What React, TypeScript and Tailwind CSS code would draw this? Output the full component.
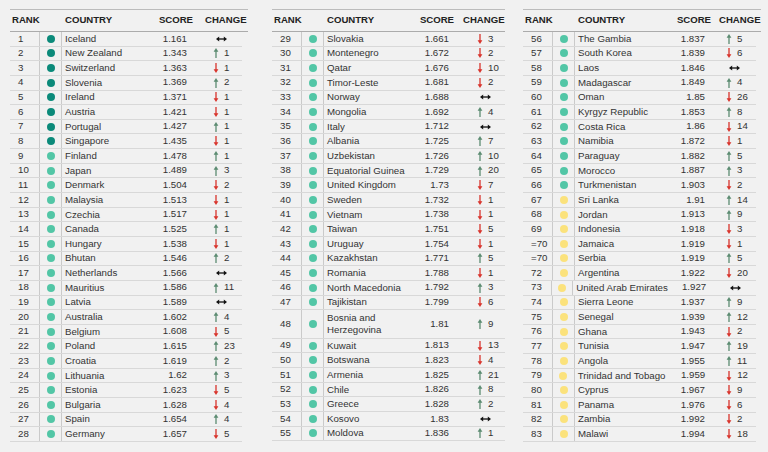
import React from 'react';

type Row = [string, string, string, 'up' | 'down' | 'same', string?, number?];

const col1: Row[] = [
  ['1', 'Iceland', '1.161', 'same', '', 0],
  ['2', 'New Zealand', '1.343', 'up', '1', 0],
  ['3', 'Switzerland', '1.363', 'down', '1', 0],
  ['4', 'Slovenia', '1.369', 'up', '2', 0],
  ['5', 'Ireland', '1.371', 'down', '1', 0],
  ['6', 'Austria', '1.421', 'down', '1', 0],
  ['7', 'Portugal', '1.427', 'up', '1', 0],
  ['8', 'Singapore', '1.435', 'down', '1', 0],
  ['9', 'Finland', '1.478', 'up', '1'],
  ['10', 'Japan', '1.489', 'up', '3'],
  ['11', 'Denmark', '1.504', 'down', '2'],
  ['12', 'Malaysia', '1.513', 'down', '1'],
  ['13', 'Czechia', '1.517', 'down', '1'],
  ['14', 'Canada', '1.525', 'up', '1'],
  ['15', 'Hungary', '1.538', 'down', '1'],
  ['16', 'Bhutan', '1.546', 'up', '2'],
  ['17', 'Netherlands', '1.566', 'same'],
  ['18', 'Mauritius', '1.586', 'up', '11'],
  ['19', 'Latvia', '1.589', 'same'],
  ['20', 'Australia', '1.602', 'up', '4'],
  ['21', 'Belgium', '1.608', 'down', '5'],
  ['22', 'Poland', '1.615', 'up', '23'],
  ['23', 'Croatia', '1.619', 'up', '2'],
  ['24', 'Lithuania', '1.62', 'up', '3'],
  ['25', 'Estonia', '1.623', 'down', '5'],
  ['26', 'Bulgaria', '1.628', 'down', '4'],
  ['27', 'Spain', '1.654', 'up', '4'],
  ['28', 'Germany', '1.657', 'down', '5'],
];

const col2: Row[] = [
  ['29', 'Slovakia', '1.661', 'down', '3'],
  ['30', 'Montenegro', '1.672', 'down', '2'],
  ['31', 'Qatar', '1.676', 'down', '10'],
  ['32', 'Timor-Leste', '1.681', 'down', '2'],
  ['33', 'Norway', '1.688', 'same'],
  ['34', 'Mongolia', '1.692', 'up', '4'],
  ['35', 'Italy', '1.712', 'same'],
  ['36', 'Albania', '1.725', 'up', '7'],
  ['37', 'Uzbekistan', '1.726', 'up', '10'],
  ['38', 'Equatorial Guinea', '1.729', 'up', '20'],
  ['39', 'United Kingdom', '1.73', 'down', '7'],
  ['40', 'Sweden', '1.732', 'down', '1'],
  ['41', 'Vietnam', '1.738', 'down', '1'],
  ['42', 'Taiwan', '1.751', 'down', '5'],
  ['43', 'Uruguay', '1.754', 'down', '1'],
  ['44', 'Kazakhstan', '1.771', 'up', '5'],
  ['45', 'Romania', '1.788', 'down', '1'],
  ['46', 'North Macedonia', '1.792', 'up', '3'],
  ['47', 'Tajikistan', '1.799', 'down', '6'],
  ['48', 'Bosnia and|Herzegovina', '1.81', 'up', '9'],
  ['49', 'Kuwait', '1.813', 'down', '13'],
  ['50', 'Botswana', '1.823', 'down', '4'],
  ['51', 'Armenia', '1.825', 'up', '21'],
  ['52', 'Chile', '1.826', 'up', '8'],
  ['53', 'Greece', '1.828', 'up', '2'],
  ['54', 'Kosovo', '1.83', 'same'],
  ['55', 'Moldova', '1.836', 'up', '1'],
];

const col3: Row[] = [
  ['56', 'The Gambia', '1.837', 'up', '5'],
  ['57', 'South Korea', '1.839', 'down', '6'],
  ['58', 'Laos', '1.846', 'same'],
  ['59', 'Madagascar', '1.849', 'up', '4'],
  ['60', 'Oman', '1.85', 'down', '26'],
  ['61', 'Kyrgyz Republic', '1.853', 'up', '8'],
  ['62', 'Costa Rica', '1.86', 'down', '14'],
  ['63', 'Namibia', '1.872', 'down', '1'],
  ['64', 'Paraguay', '1.882', 'up', '5'],
  ['65', 'Morocco', '1.887', 'up', '3'],
  ['66', 'Turkmenistan', '1.903', 'down', '2'],
  ['67', 'Sri Lanka', '1.91', 'up', '14', 2],
  ['68', 'Jordan', '1.913', 'up', '9', 2],
  ['69', 'Indonesia', '1.918', 'down', '3', 2],
  ['=70', 'Jamaica', '1.919', 'down', '1', 2],
  ['=70', 'Serbia', '1.919', 'up', '5', 2],
  ['72', 'Argentina', '1.922', 'down', '20', 2],
  ['73', 'United Arab Emirates', '1.927', 'same', '', 2],
  ['74', 'Sierra Leone', '1.937', 'up', '9', 2],
  ['75', 'Senegal', '1.939', 'up', '12', 2],
  ['76', 'Ghana', '1.943', 'down', '2', 2],
  ['77', 'Tunisia', '1.947', 'up', '19', 2],
  ['78', 'Angola', '1.955', 'up', '11', 2],
  ['79', 'Trinidad and Tobago', '1.959', 'down', '12', 2],
  ['80', 'Cyprus', '1.967', 'down', '9', 2],
  ['81', 'Panama', '1.976', 'down', '6', 2],
  ['82', 'Zambia', '1.992', 'down', '2', 2],
  ['83', 'Malawi', '1.994', 'down', '18', 2],
];

const dotColors = ['bg-[#0b8a7a]', 'bg-[#52c6a6]', 'bg-[#fbe27c]'];

function Arrow({ dir }: { dir: 'up' | 'down' | 'same' }) {
  if (dir === 'same') {
    return (
      <svg width="11" height="6" viewBox="0 0 11 6" className="ml-[3px]">
        <path d="M2 3H9" stroke="#111" strokeWidth="1.3" />
        <path d="M0 3L3.2 0.4V5.6Z" fill="#111" />
        <path d="M11 3L7.8 0.4V5.6Z" fill="#111" />
      </svg>
    );
  }
  const color = dir === 'up' ? '#5b8b71' : '#d8342c';
  return (
    <svg width="6" height="10" viewBox="0 0 6 10">
      {dir === 'up' ? (
        <>
          <path d="M3 10V3" stroke={color} strokeWidth="1.3" />
          <path d="M0.6 3.8L3 0L5.4 3.8Z" fill={color} />
        </>
      ) : (
        <>
          <path d="M3 0V7" stroke={color} strokeWidth="1.3" />
          <path d="M0.6 6.2L3 10L5.4 6.2Z" fill={color} />
        </>
      )}
    </svg>
  );
}

interface TableProps {
  rows: Row[];
  width: string;
  rowWidth: string;
  scoreBox: string;
  changeBox: string;
  hdrScore: string;
  hdrChange: string;
}

function Table({ rows, width, rowWidth, scoreBox, changeBox, hdrScore, hdrChange }: TableProps) {
  return (
    <div className={width}>
      {/* Header */}
      <div className="flex items-center h-[23px] border-t-[1.5px] border-b-[1.5px] border-t-[#bcbcbc] border-b-[#ababab] text-[9.6px] font-bold text-[#222]">
        <div className="w-[52px] pl-[2px]">RANK</div>
        <div className="flex-1 pl-[3px]">COUNTRY</div>
        <div className={hdrScore}>SCORE</div>
        <div className={hdrChange}>CHANGE</div>
      </div>

      {rows.map((r, i) => {
        const [rank, country, score, dir, change, tier] = r;
        const dot = dotColors[tier ?? 1];
        const tall = country.includes('|');
        return (
          <div
            key={i}
            className={`flex ${rowWidth} ${tall ? 'h-[28.6px]' : 'h-[14.65px]'} border-b border-[#d8d8d8] text-[9.7px] text-[#333]`}
          >
            <div className="w-[30px] pl-[8px] flex items-center border-r border-[#cacaca]">{rank}</div>
            <div className="w-[22px] flex items-center justify-center border-r border-[#cacaca]">
              <div className={`w-[8px] h-[8px] rounded-full ${dot}`}></div>
            </div>
            <div className="flex-1 pl-[3px] flex items-center whitespace-nowrap leading-[12px]">
              {tall ? (
                <span>
                  {country.split('|')[0]}
                  <br />
                  {country.split('|')[1]}
                </span>
              ) : (
                country
              )}
            </div>
            <div className={scoreBox}>{score}</div>
            <div className={changeBox}>
              <Arrow dir={dir} />
              {change ? <span className="ml-[5px]">{change}</span> : null}
            </div>
          </div>
        );
      })}
    </div>
  );
}

export default function App() {
  return (
    <div className="w-[768px] h-[452px] overflow-hidden bg-[#f1f1f1] flex pl-[10px] pt-[9px] font-['Liberation_Sans',Arial,sans-serif]">
      <Table
        rows={col1}
        width="w-[238px]"
        rowWidth="w-[232px]"
        scoreBox="w-[40px] flex items-center justify-end"
        changeBox="w-[55px] pl-[26px] flex items-center"
        hdrScore="text-right mr-[12px]"
        hdrChange="w-[43px]"
      />
      <div className="w-[24px]" />
      <Table
        rows={col2}
        width="w-[233px]"
        rowWidth="w-[233px]"
        scoreBox="w-[40px] flex items-center justify-end"
        changeBox="w-[56px] pl-[28px] flex items-center"
        hdrScore="text-right mr-[9px]"
        hdrChange="w-[42px]"
      />
      <div className="w-[18px]" />
      <Table
        rows={col3}
        width="w-[238px]"
        rowWidth="w-[233px]"
        scoreBox="w-[40px] flex items-center justify-end"
        changeBox="w-[51px] pl-[21px] flex items-center"
        hdrScore="text-right mr-[8px]"
        hdrChange="w-[42px]"
      />
    </div>
  );
}
